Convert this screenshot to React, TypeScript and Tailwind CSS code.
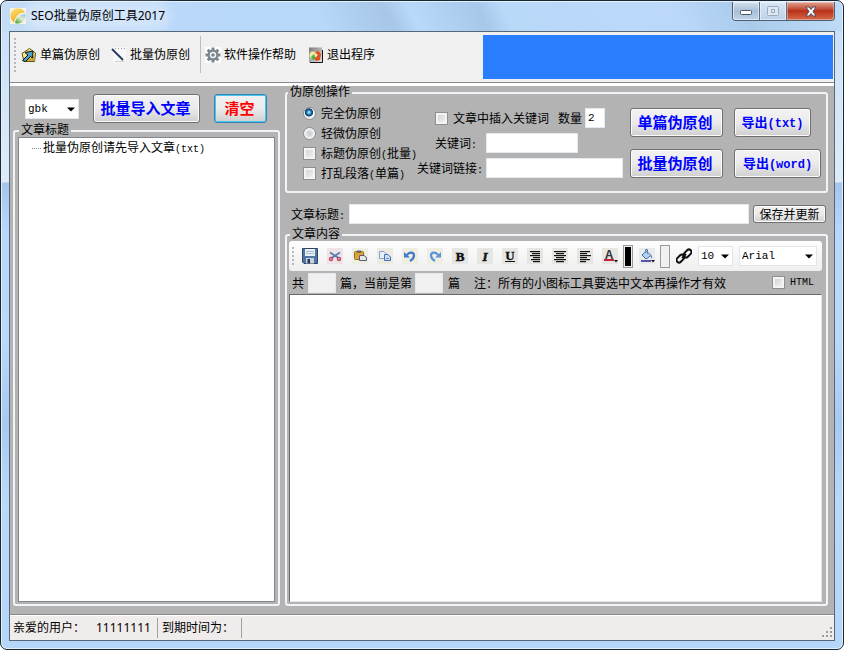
import React from "react";

const SONG = "font-['Noto_Sans_CJK_SC',sans-serif]";
const HEI = "font-['Noto_Sans','Noto_Sans_CJK_SC',sans-serif]";
const group = "min-w-0 rounded-[3px] border-2 border-[#f0f4f8]";
const legend = "ml-px h-3 px-[2px] leading-2";
const field = "h-5 min-w-0 border border-[#e3e9ef] bg-white px-[2px]";
const pushButton =
  "shrink-0 rounded-[3px] border border-[#707070] bg-linear-to-b from-[#f2f2f2] via-[#ebebeb] via-50% to-[#cfcfcf] shadow-[inset_0_0_0_1px_#fbfbfb]";
const box =
  "size-[13px] shrink-0 appearance-none border border-[#8e8f8f] bg-linear-to-br from-[#cbcfd5] to-[#f6f6f6] shadow-[inset_0_0_0_2px_#f4f4f4] checked:bg-[#3a76b8]";
const radio =
  "size-[13px] shrink-0 appearance-none rounded-full border border-[#8e8f8f] bg-[radial-gradient(circle,#d0d4d8_0_25%,#f4f4f4_60%)] checked:bg-[radial-gradient(circle_at_45%_40%,#9be0fa_0_8%,#1678b4_25%,#123c62_42%,#f4f4f4_50%)]";
const option = "flex h-4 items-center gap-[5px] whitespace-nowrap";

function Latin({ children }: { children: React.ReactNode }) {
  return <span className="font-['Liberation_Mono',monospace] text-[10px]">{children}</span>;
}

function Grip({ className }: { className: string }) {
  return (
    <span
      aria-hidden="true"
      className={`w-[2px] shrink-0 bg-[repeating-linear-gradient(to_bottom,#b8b8b8_0_2px,transparent_2px_4px)] ${className}`}
    />
  );
}

function Dropdown({ label, options, width }: { label: string; options: string[]; width: string }) {
  return (
    <span className={`relative shrink-0 ${width}`}>
      <select
        aria-label={label}
        className="block h-5 w-full appearance-none border border-[#e0e6ec] bg-white pl-[2px] font-['Liberation_Mono',monospace] text-[11px] leading-4"
      >
        {options.map((o) => (
          <option key={o}>{o}</option>
        ))}
      </select>
      <svg className="pointer-events-none absolute top-2 right-1" width="8" height="5" viewBox="0 0 8 5">
        <path d="M0 0.5H8L4 4.5Z" fill="#000" />
      </svg>
    </span>
  );
}

function ToolIcon({ label, bg = "", children }: { label: string; bg?: string; children: React.ReactNode }) {
  return (
    <button type="button" aria-label={label} className={`size-4 shrink-0 ${bg}`}>
      <svg width="16" height="16" viewBox="0 0 16 16">
        {children}
      </svg>
    </button>
  );
}

function Lines({ rows }: { rows: [number, number][] }) {
  return (
    <>
      {rows.map(([x, w], i) => (
        <rect key={i} x={x} y={3 + i * 2} width={w} height="1.2" fill="#111" />
      ))}
    </>
  );
}

function TitleBar() {
  return (
    <header className="mx-px mt-px flex h-[29px] shrink-0 items-start rounded-t-[5px] bg-[linear-gradient(65deg,#c4dcf5_0%,#b9d8fa_22%,#b7d8f8_38%,#a7c6e8_46%,#b9d9f9_49%,#a7c8ea_57%,#b9d9f9_60%,#bbd8fa_80%,#a9cbea_88%,#c0dcf8_100%)]">
      <div className="flex h-7 items-center gap-[5px] pl-2 text-[12px]">
        <svg width="16" height="16" viewBox="0 0 16 16">
          <defs>
            <linearGradient id="logoGold" x1="0" y1="0" x2="0.6" y2="1">
              <stop offset="0" stopColor="#ffe66b" />
              <stop offset="1" stopColor="#eda326" />
            </linearGradient>
            <linearGradient id="logoGreen" x1="1" y1="0" x2="0.2" y2="1">
              <stop offset="0" stopColor="#7fb6e8" />
              <stop offset="0.5" stopColor="#dcecc8" />
              <stop offset="1" stopColor="#4ca53a" />
            </linearGradient>
          </defs>
          <rect width="16" height="16" fill="#f5f3e6" />
          <path d="M0.500 8C0.500 3 4 0.500 8 0.500C12 0.500 14 2.500 15 5C10 4 6 7 4 14.500C2 13 0.500 11 0.500 8Z" fill="url(#logoGold)" />
          <path d="M5 15C6 9.500 9 6 15.500 6C16 11 12.500 15.500 8 15.500C7 15.500 6 15.500 5 15Z" fill="url(#logoGreen)" />
        </svg>
        <h1 className="rounded-full bg-white/30 shadow-[0_0_10px_6px_rgba(255,255,255,0.3)]">SEO批量伪原创工具2017</h1>
      </div>
      <div className="mr-[7px] ml-auto flex h-[19px] rounded-b-[4px] border border-t-0 border-[#4d5f73] text-white">
        <button type="button" aria-label="最小化" className="flex w-[27px] items-center justify-center rounded-bl-[3px] border-r border-[#5d6f83] bg-linear-to-b from-[#d5e1ee] via-[#a9bfd7] via-50% to-[#bdd3e9] pt-1 shadow-[inset_0_0_0_1px_rgba(255,255,255,0.5)]">
          <svg width="12" height="6" viewBox="0 0 12 6"><rect x="0.500" y="0.500" width="11" height="4" rx="1" fill="#fff" stroke="#4b5563" /></svg>
        </button>
        <button type="button" aria-label="最大化" className="flex w-[27px] items-center justify-center border-r border-[#5d6f83] bg-linear-to-b from-[#d9e6f4] to-[#bbd2ea] shadow-[inset_0_0_0_1px_rgba(255,255,255,0.5)]">
          <svg width="12" height="10" viewBox="0 0 12 10" fill="#dce7f2" stroke="#9cabbc"><rect x="0.500" y="0.500" width="11" height="9" rx="1" /><rect x="4.500" y="3.500" width="3" height="3" /></svg>
        </button>
        <button type="button" aria-label="关闭" className="flex w-[47px] items-center justify-center rounded-br-[3px] bg-linear-to-b from-[#dfa394] via-[#b92e17] via-50% to-[#d6694b] shadow-[inset_0_0_0_1px_rgba(255,255,255,0.35)]">
          <svg width="12" height="11" viewBox="0 0 12 11"><path d="M1 1H4L6 3.500L8 1H11L8 5.500L11 10H8L6 7.500L4 10H1L4 5.500Z" fill="#fff" stroke="#4d4f62" /></svg>
        </button>
      </div>
    </header>
  );
}

function MainToolbar() {
  return (
    <div className="flex h-[54px] shrink-0 items-start border-b-[3px] border-white bg-[#f0f0f0] shadow-[inset_0_-1px_0_#8c8c96]">
      <nav className="flex w-[473px] shrink-0 items-center pt-1 pl-[4px]">
        <Grip className="h-[34px]" />
        <button type="button" className="ml-[5px] flex items-center gap-[3px]">
          <svg width="16" height="16" viewBox="0 0 16 16">
            <path d="M1 6.500L8.500 1.500L14.500 6L13.500 14.500H3Z" fill="#f5e68a" stroke="#5f5512" />
            <path d="M4 14L13.500 8V14Z" fill="#c8aa38" />
            <path d="M1.500 13.500L7 8L4 5.500L12 4L11.500 11L9.500 9.500L4.500 14.500Z" fill="#4aa3c8" stroke="#101010" />
          </svg>
          单篇伪原创
        </button>
        <button type="button" className="ml-[11px] flex items-center gap-[4px]">
          <svg width="15" height="16" viewBox="0 0 15 16">
            <rect x="2" width="13" height="16" fill="#f8f8f8" />
            <path d="M4 1.500H14" stroke="#999" strokeDasharray="1 2" />
            <path d="M1 2L12 13" stroke="#24375f" strokeWidth="1.800" />
            <path d="M4 14.500H14" stroke="#d0d0d0" />
          </svg>
          批量伪原创
        </button>
        <span className="mr-1 ml-[10px] h-[37px] w-px bg-[#bdbdbd]" />
        <button type="button" className="flex items-center gap-[3px]">
          <svg width="16" height="16" viewBox="0 0 16 16">
            <rect width="16" height="16" fill="#fff" />
            <g stroke="#7b868e" strokeWidth="3">
              <path d="M8 0.500V15.500M0.500 8H15.500M2.700 2.700L13.300 13.300M13.300 2.700L2.700 13.300" />
            </g>
            <circle cx="8" cy="8" r="5.500" fill="#7b868e" />
            <circle cx="8" cy="8" r="3.200" fill="#f5f5f5" />
            <circle cx="8" cy="8" r="1.800" fill="#7b868e" />
          </svg>
          软件操作帮助
        </button>
        <button type="button" className="ml-[12px] flex items-center gap-[3px]">
          <svg width="16" height="16" viewBox="0 0 16 16">
            <defs>
              <linearGradient id="exitGrey" x1="0" y1="0" x2="1" y2="1">
                <stop offset="0" stopColor="#777" />
                <stop offset="1" stopColor="#e8e8e8" />
              </linearGradient>
            </defs>
            <rect x="1" y="0.500" width="13" height="15" fill="url(#exitGrey)" />
            <path d="M14.500 3V15.500H2" fill="none" stroke="#111" />
            <circle cx="5" cy="8" r="3.500" fill="#f0eb9c" />
            <path d="M3 10L6 7L8 12L5 13Z" fill="#45b748" />
            <path d="M7 6L10 3.500L13 7L12 13L8 14L6 11L9 10Z" fill="#e34f24" />
            <path d="M7 6L10 8L8 9Z" fill="#fff" />
          </svg>
          退出程序
        </button>
      </nav>
      <div className="mt-[3px] mr-px h-[44px] flex-1 bg-[#2a7dfd]" />
    </div>
  );
}

function ArticlePanel() {
  return (
    <section className="flex w-[270px] shrink-0 flex-col pl-[3px]">
      <div className="flex items-center pt-2 pl-[12px]">
        <Dropdown label="编码" options={["gbk", "utf-8"]} width="w-[54px]" />
        <button type="button" className={`${pushButton} ml-[14px] h-[29px] w-[107px] pr-[2px] text-[15px] font-bold text-[#0000ff]`}>
          批量导入文章
        </button>
        <button
          type="button"
          className="ml-[14px] h-[29px] w-[53px] rounded-[3px] border border-[#3c7fb1] bg-linear-to-b from-[#f2f2f2] via-[#ebebeb] via-50% to-[#cfcfcf] pr-[2px] text-[15px] font-bold text-[#ff0000] shadow-[inset_0_0_0_1px_#46c8f0]"
        >
          清空
        </button>
      </div>
      <fieldset className={`${group} mt-[2px] flex flex-1 flex-col px-[3px] pb-[2px]`}>
        <legend className={legend}>文章标题</legend>
        <ul className="flex-1 border border-[#828790] bg-white pt-px leading-4">
          <li className="flex items-center gap-[2px] pl-[13px]">
            <span className="w-[9px] border-t border-dotted border-[#888]" />
            <span>
              批量伪原创请先导入文章<Latin>(txt)</Latin>
            </span>
          </li>
        </ul>
      </fieldset>
    </section>
  );
}

function Operations() {
  return (
    <fieldset className={`${group} h-[106px] shrink-0`}>
      <legend className={legend}>伪原创操作</legend>
      <div className="flex items-start">
        <div className="ml-4 flex w-[114px] shrink-0 flex-col gap-1 pt-[6px]">
          <label className={option}>
            <input type="radio" name="mode" defaultChecked className={radio} />完全伪原创
          </label>
          <label className={option}>
            <input type="radio" name="mode" className={radio} />轻微伪原创
          </label>
          <label className={option}>
            <input type="checkbox" className={box} />
            <span>标题伪原创<Latin>(</Latin>批量<Latin>)</Latin></span>
          </label>
          <label className={option}>
            <input type="checkbox" className={box} />
            <span>打乱段落<Latin>(</Latin>单篇<Latin>)</Latin></span>
          </label>
        </div>
        <div className="flex w-[206px] shrink-0 flex-col gap-[5px] pt-[9px]">
          <div className="flex items-center pl-[18px]">
            <label className="flex items-center gap-[5px]">
              <input type="checkbox" className={box} />文章中插入关键词
            </label>
            <label className="ml-[9px] flex items-center gap-[3px]">
              数量
              <input defaultValue="2" className={`${field} w-5 font-['Liberation_Mono',monospace] text-[11px]`} />
            </label>
          </div>
          <label className="flex items-center pl-[18px]">
            <span className="w-[51px]">关键词<Latin>:</Latin></span>
            <input className={`${field} w-[92px]`} />
          </label>
          <label className="flex items-center">
            <span className="w-[69px]">关键词链接<Latin>:</Latin></span>
            <input className={`${field} flex-1`} />
          </label>
        </div>
        <div className="ml-[7px] grid shrink-0 grid-cols-[93px_87px] gap-x-[11px] gap-y-3 pt-[9px] font-bold text-[#0000ff]">
          <button type="button" className={`${pushButton} h-[29px] pr-[3px] text-[15px]`}>单篇伪原创</button>
          <button type="button" className={`${pushButton} h-[29px] w-[77px] text-[13px]`}>
            导出<span className="font-['Liberation_Mono',monospace] text-[12px]">(txt)</span>
          </button>
          <button type="button" className={`${pushButton} h-[29px] pr-[3px] text-[15px]`}>批量伪原创</button>
          <button type="button" className={`${pushButton} h-[29px] text-[13px]`}>
            导出<span className="font-['Liberation_Mono',monospace] text-[12px]">(word)</span>
          </button>
        </div>
      </div>
    </fieldset>
  );
}

function FormatBar() {
  const letter = "fill-[#111] font-['Liberation_Serif',serif] font-bold text-[13px]";
  return (
    <div className="flex h-[30px] items-center rounded-[3px] bg-linear-to-b from-[#fdfdfd] to-[#efefef] pl-[3px]">
      <Grip className="mr-2 h-[18px]" />
      <div className="flex gap-[9px]">
        <ToolIcon label="保存">
          <path d="M0.500 0.500H15.500V15.500H2L0.500 14Z" fill="#4d76a5" stroke="#2e4664" />
          <rect x="3" y="1" width="10" height="7" fill="#e9f0f6" />
          <path d="M4 3.500H12M4 5.500H12" stroke="#a8bccd" />
          <rect x="4" y="10" width="8" height="5.500" fill="#c9d2da" />
          <rect x="5.500" y="11" width="2.500" height="4.500" fill="#223a58" />
        </ToolIcon>
        <ToolIcon label="剪切" bg="bg-[#eee4e8]">
          <path d="M3 4.500L11.500 10M13 4.500L4.500 10" stroke="#5a79b5" strokeWidth="1.800" />
          <circle cx="4" cy="11" r="1.500" fill="none" stroke="#c34563" strokeWidth="1.400" />
          <circle cx="12" cy="11" r="1.500" fill="none" stroke="#c34563" strokeWidth="1.400" />
        </ToolIcon>
        <ToolIcon label="粘贴" bg="bg-[#efeee2]">
          <rect x="2.500" y="3.500" width="9" height="8" rx="1" fill="#dca440" stroke="#9b6c19" />
          <rect x="5" y="2.500" width="4" height="2.500" fill="#6d675c" />
          <path d="M7.500 7.500H12L14.500 9.500V12.500H7.500Z" fill="#e4e8f0" stroke="#555e70" />
        </ToolIcon>
        <ToolIcon label="复制" bg="bg-[#ecebe2]">
          <path d="M2.500 3.500H7L9 5.500V10.500H2.500Z" fill="#e8effb" stroke="#86a1d0" />
          <path d="M7.500 6.500H11L13.500 9V12.500H7.500Z" fill="#cbdaf5" stroke="#486fb5" />
          <path d="M9 10.500H12" stroke="#6f91cb" />
        </ToolIcon>
        <ToolIcon label="撤销" bg="bg-[#efeee2]">
          <path d="M5 7C7 3.500 12 4 12 7.500C12 10 10.500 11.500 8 13" fill="none" stroke="#4279cb" strokeWidth="2.200" />
          <path d="M2 4V9.500H8Z" fill="#4279cb" />
        </ToolIcon>
        <ToolIcon label="重做" bg="bg-[#efeee2]">
          <path d="M11 7C9 3.500 4 4 4 7.500C4 10 5.500 11.500 8 13" fill="none" stroke="#5b94de" strokeWidth="2.200" />
          <path d="M14 4V9.500H8Z" fill="#5b94de" />
        </ToolIcon>
        <ToolIcon label="加粗" bg="bg-[#e6e6e3]">
          <text x="8" y="12.500" textAnchor="middle" stroke="#111" strokeWidth="0.500" className={letter}>B</text>
        </ToolIcon>
        <ToolIcon label="斜体" bg="bg-[#e6e6e3]">
          <text x="8" y="12.500" textAnchor="middle" stroke="#111" strokeWidth="0.500" className={`${letter} italic`}>I</text>
        </ToolIcon>
        <ToolIcon label="下划线" bg="bg-[#e6e6e3]">
          <text x="8" y="11.500" textAnchor="middle" stroke="#111" strokeWidth="0.300" className={letter}>U</text>
          <rect x="3" y="13" width="10" height="1" fill="#111" />
        </ToolIcon>
        <ToolIcon label="右对齐" bg="bg-[#e6e6e3]">
          <Lines rows={[[3, 10], [5, 8], [3, 10], [6, 7], [4, 9], [6, 7]]} />
        </ToolIcon>
        <ToolIcon label="居中" bg="bg-[#e6e6e3]">
          <Lines rows={[[2, 12], [4, 8], [2, 12], [4, 8], [2, 12], [4, 8]]} />
        </ToolIcon>
        <ToolIcon label="左对齐" bg="bg-[#e6e6e3]">
          <Lines rows={[[3, 10], [3, 7], [3, 11], [3, 7], [3, 10], [3, 6]]} />
        </ToolIcon>
        <ToolIcon label="文字颜色" bg="bg-[#e6e6e3]">
          <text x="7" y="10.500" textAnchor="middle" className="fill-[#333] font-['Liberation_Sans',sans-serif] text-[12px] font-bold">A</text>
          <rect x="2" y="11" width="10" height="2" fill="#c9203e" />
          <path d="M12 12H16L14 14.500Z" fill="#111" />
        </ToolIcon>
      </div>
      <div className="ml-[5px] flex items-center gap-[6px]">
        <button type="button" aria-label="当前文字颜色" className="h-[23px] w-[10px] border border-[#999] bg-black shadow-[inset_0_0_0_1px_#eee]" />
        <ToolIcon label="背景颜色" bg="bg-[#e8eaed]">
          <path d="M3 7L7.500 3L12 7.500L7 11Z" fill="#b7d3ef" stroke="#3f6eaa" />
          <path d="M6.500 5V1.500H8.500V6" fill="none" stroke="#5b7fa9" />
          <path d="M11.500 7C13.500 8 13 10 12.500 10.500Z" fill="#2e65b0" />
          <rect x="2" y="12" width="10" height="2" fill="#5a53a9" />
          <path d="M12 12H16L14 14.500Z" fill="#111" />
        </ToolIcon>
        <button type="button" aria-label="当前背景颜色" className="-ml-px h-[23px] w-[10px] border border-[#999] bg-[#f0f0f0]" />
        <ToolIcon label="插入链接">
          <g fill="none" stroke="#111" strokeWidth="2">
            <rect x="7.500" y="2.500" width="9" height="5" rx="2.500" transform="rotate(-45 12 5) translate(-0.700 0)" />
            <rect x="-0.500" y="8.500" width="9" height="5" rx="2.500" transform="rotate(-45 4 11) translate(0.700 0)" />
            <path d="M6 10L10 6" />
          </g>
        </ToolIcon>
        <Dropdown label="字号" options={["10", "12", "14"]} width="w-[35px]" />
        <Dropdown label="字体" options={["Arial", "SimSun"]} width="w-[78px]" />
      </div>
    </div>
  );
}

function Editor() {
  return (
    <fieldset className={`${group} flex flex-1 flex-col pr-1 pb-[2px] pl-[2px]`}>
      <legend className={legend}>文章内容</legend>
      <FormatBar />
      <div className="flex h-[23px] items-center pl-[3px]">
        <label htmlFor="total">共</label>
        <input id="total" readOnly className="mx-1 h-5 w-7 border border-[#e3e9ef] bg-[#f0f0f0]" />
        <label htmlFor="current">篇，当前是第</label>
        <input id="current" readOnly className="mx-[3px] h-5 w-7 border border-[#e3e9ef] bg-[#f0f0f0]" />
        <span className="ml-[2px]">篇</span>
        <span className="ml-[14px]">注：所有的小图标工具要选中文本再操作才有效</span>
        <label className="mr-2 ml-auto flex items-center gap-[5px]">
          <input type="checkbox" className={box} />
          <Latin>HTML</Latin>
        </label>
      </div>
      <textarea
        aria-label="文章内容"
        className="block w-full flex-1 resize-none border border-t-[#696969] border-r-[#e3e3e3] border-b-[#e3e3e3] border-l-[#696969] bg-white"
      />
    </fieldset>
  );
}

function StatusBar() {
  return (
    <footer className={`flex h-[26px] shrink-0 items-center border-t border-[#8b8b8b] bg-[#f0eceb] pl-[3px] shadow-[inset_0_1px_0_#fff] ${HEI}`}>
      <span className="w-[83px]">亲爱的用户：</span>
      <span className="w-[61px]">11111111</span>
      <span className="h-5 w-px bg-[#a0a0a0]" />
      <span className="w-[83px] pl-1">到期时间为：</span>
      <span className="h-5 w-px bg-[#a0a0a0]" />
      <svg className="mr-[2px] mb-[3px] ml-auto self-end" width="10" height="10" viewBox="0 0 10 10" fill="#9c9c9c">
        <path d="M8 0h2v2h-2zM4 4h2v2h-2zM8 4h2v2h-2zM0 8h2v2h-2zM4 8h2v2h-2zM8 8h2v2h-2z" />
      </svg>
    </footer>
  );
}

export default function App() {
  return (
    <div className={`flex min-h-screen flex-col rounded-[7px] border border-[#1c2633] bg-[linear-gradient(to_bottom,#c0dbf7_0,#cfe3f8_60px,#dfebf8_181px,#a5c6e8_182px,#b7d8fa_230px,#b9d9fb_340px,#a8caec_420px,#b9d9fb_500px,#b5d6f8_100%)] text-[12px] text-black shadow-[inset_0_0_0_1px_#e0f2fc] ${HEI}`}>
      <TitleBar />
      <div className="mx-2 mb-2 flex flex-1 flex-col border border-[#566778] bg-[#b3b3b3]">
        <MainToolbar />
        <main className={`flex flex-1 pb-2 ${SONG}`}>
          <ArticlePanel />
          <section className="flex min-w-0 flex-1 flex-col pt-px pr-[6px] pl-[5px]">
            <Operations />
            <div className="mt-[11px] mb-[5px] flex items-center pl-[6px]">
              <label htmlFor="title" className="w-[58px] shrink-0">文章标题<Latin>:</Latin></label>
              <input id="title" className={`${field} flex-1`} />
              <button type="button" className={`${pushButton} mr-[2px] ml-1 h-[18px] w-[73px] leading-4`}>保存并更新</button>
            </div>
            <Editor />
          </section>
        </main>
        <StatusBar />
      </div>
    </div>
  );
}
